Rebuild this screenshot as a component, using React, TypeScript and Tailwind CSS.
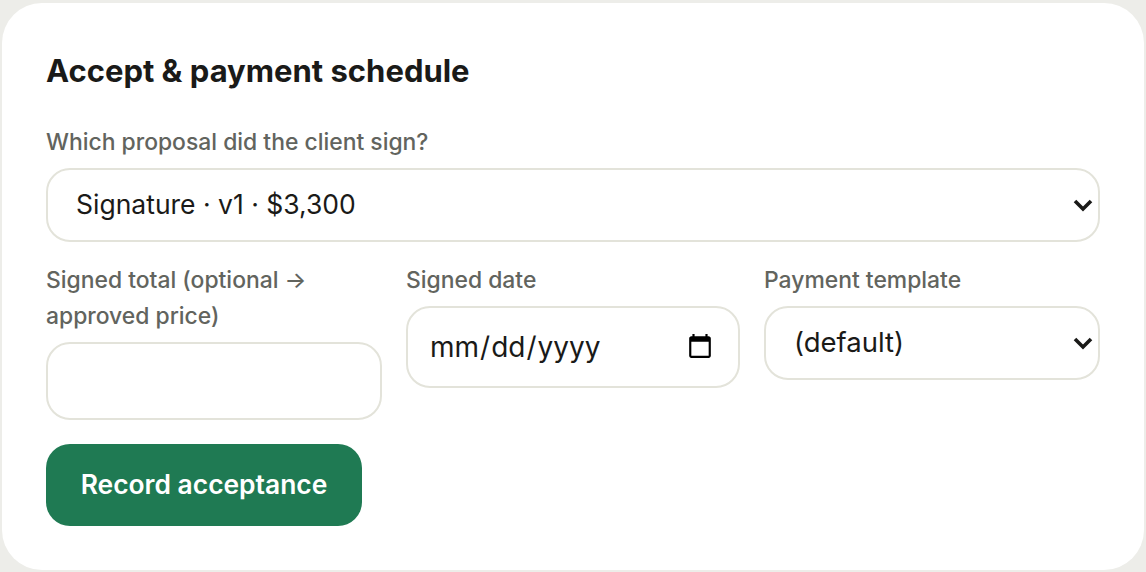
const fieldClass =
  "w-full rounded-[24px] border-2 border-[#e3e3da] bg-white text-[#1a1a18] outline-none"

function Label({ children }: { children: React.ReactNode }) {
  return <label className="mb-2 block text-[22.9px] leading-9 font-medium text-[#62645e]">{children}</label>
}

function Select({ value, textClass }: { value: string; textClass: string }) {
  return (
    <div className="relative">
      <select className={`${fieldClass} ${textClass} h-[74px] appearance-none pr-12 pl-7`} defaultValue={value}>
        <option value={value}>{value}</option>
      </select>
      <svg
        className="pointer-events-none absolute top-1/2 right-[7px] h-[14px] w-[20px] -translate-y-1/2"
        viewBox="0 0 20 14"
        fill="none"
      >
        <path d="M2 3l8 8 8-8" stroke="#1a1a18" strokeWidth="3.6" />
      </svg>
    </div>
  )
}

export default function App() {
  return (
    <div className="h-[572px] w-[1146px] bg-[#ededE9] px-[2px] pt-[3px] pb-[2px] font-['Inter',sans-serif]">
      <section className="h-full rounded-[40px] bg-white px-[44px] pt-[44px]">
        <h2 className="mb-[29px] text-[31px] leading-[48px] font-bold text-[#1a1a18]">Accept &amp; payment schedule</h2>
        <div className="mb-5">
          <Label>Which proposal did the client sign?</Label>
          <Select value="Signature · v1 · $3,300" textClass="text-[26.5px]" />
        </div>
        <div className="mb-6 grid grid-cols-[336px_334px_1fr] items-start gap-x-6">
          <div>
            <Label>Signed total (optional → approved price)</Label>
            <input className={`${fieldClass} h-[78px] px-[22px] text-[28px]`} type="text" />
          </div>
          <div>
            <Label>Signed date</Label>
            <input className={`${fieldClass} h-[82px] pr-[22px] pl-[21px] text-[28px]`} type="date" />
          </div>
          <div>
            <Label>Payment template</Label>
            <Select value="(default)" textClass="text-[27.5px]" />
          </div>
        </div>
        <button className="h-[82px] w-[316px] rounded-[24px] bg-[#1f7a53] text-[26.4px] font-semibold text-white">
          Record acceptance
        </button>
      </section>
    </div>
  )
}
